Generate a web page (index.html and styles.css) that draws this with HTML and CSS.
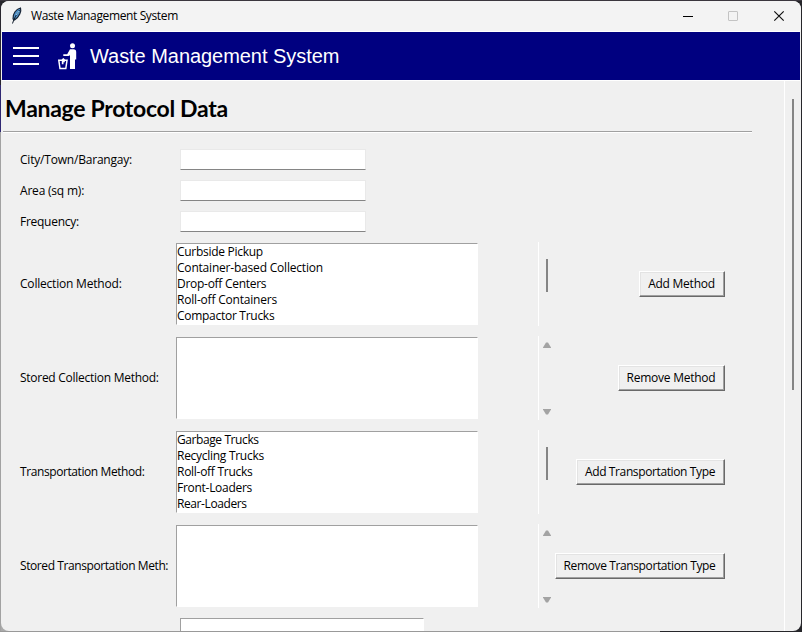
FILE: index.html
```
<!DOCTYPE html>
<html lang="en">
<head>
<meta charset="utf-8">
<title>Waste Management System</title>
<link rel="stylesheet" href="styles.css">
</head>
<body>
<div class="window">
  <header class="titlebar">
    <svg class="feather" width="12" height="18" viewBox="0 0 12 18"><path d="M2 12C1.500 7 5 2 9.500 1c1 3-1 9-6 12z" fill="#4d8fc8" stroke="#182536" stroke-width="1.200"/><path d="M8.500 3C6 7 3 11 1.500 16.500" fill="none" stroke="#111c2b" stroke-width="1"/><path d="M5 8l3-4" stroke="#9bd0f2" stroke-width="1"/></svg>
    <span class="caption">Waste Management System</span>
    <svg class="controls" width="104" height="12" viewBox="0 0 104 12"><path d="M0 6.500h10" stroke="#000"/><rect x="45.500" y="1.500" width="9" height="9" rx=".5" fill="none" stroke="#c3c3c3"/><path d="M91.300 1.300l9.400 9.400M100.700 1.300l-9.400 9.400" stroke="#111" stroke-width="1.200"/></svg>
  </header>
  <nav class="navbar">
    <div class="burger"><i></i><i></i><i></i></div>
    <svg class="logo" width="20" height="27" viewBox="0 0 20 27" fill="#fff"><circle cx="14.500" cy="2.800" r="2.500"/><path d="M12 6.300h3.500q2.700 0 2.700 2.700v7.500H17V26h-5V12.300L10.500 13H5.300v-1.800h3.900z"/><path d="M.8 17.300h8.200L7.800 25.500H2z" fill="none" stroke="#fff" stroke-width="1.500"/><path d="M3.800 16.200l1.500-1.200 1.500 1.200v3H5.500v2H3.800z"/></svg>
    <span class="brand">Waste Management System</span>
  </nav>
  <div class="body">
    <main class="page">
      <h1>Manage Protocol Data</h1>
      <hr>
      <div class="form">
        <div class="row"><label class="loose">City/Town/Barangay:</label><div class="entry"></div></div>
        <div class="row"><label class="loose">Area (sq m):</label><div class="entry"></div></div>
        <div class="row"><label>Frequency:</label><div class="entry"></div></div>
        <div class="row tall"><label class="loose">Collection Method:</label>
          <ul class="list"><li>Curbside Pickup</li><li class="loose">Container-based Collection</li><li>Drop-off Centers</li><li class="loose">Roll-off Containers</li><li>Compactor Trucks</li></ul>
          <div class="scroll"><b class="thumb"></b></div><button class="w-am">Add Method</button></div>
        <div class="row tall"><label>Stored Collection Method:</label>
          <ul class="list"></ul>
          <div class="scroll arrows"><svg width="8" height="6"><path d="M0 5.500L3 .5h2l3 5V6H0z"/></svg><svg width="8" height="6"><path d="M0 .5L3 5.500h2l3-5V0H0z"/></svg></div><button class="w-rm">Remove Method</button></div>
        <div class="row tall"><label class="tight">Transportation Method:</label>
          <ul class="list"><li class="tight">Garbage Trucks</li><li>Recycling Trucks</li><li>Roll-off Trucks</li><li>Front-Loaders</li><li class="tight">Rear-Loaders</li></ul>
          <div class="scroll"><b class="thumb"></b></div><button class="w-at">Add Transportation Type</button></div>
        <div class="row tall"><label class="tight">Stored Transportation Meth:</label>
          <ul class="list"></ul>
          <div class="scroll arrows"><svg width="8" height="6"><path d="M0 5.500L3 .5h2l3 5V6H0z"/></svg><svg width="8" height="6"><path d="M0 .5L3 5.500h2l3-5V0H0z"/></svg></div><button class="w-rt">Remove Transportation Type</button></div>
        <div class="note"></div>
      </div>
    </main>
    <aside class="mainscroll"><b></b></aside>
  </div>
</div>
</body>
</html>
```

FILE: styles.css
```
* { box-sizing: border-box; }
body {
  margin: 0; width: 802px; height: 632px; overflow: hidden; padding: 1px 1px 1px 1px;
  background:
    linear-gradient(#3a363d, #3a363d) 0 0 / 802px 1px no-repeat,
    linear-gradient(#999, #999) 0 631px / 660px 1px no-repeat,
    linear-gradient(#29262e 0 85px, #302873 85px 132px, #a2a2a2 132px) 0 0 / 1px 632px no-repeat,
    linear-gradient(#aaa, #aaa) 0 622px / 10px 10px no-repeat,
    #26262a;
  font: 12px/16px "Open Sans", "Noto Sans", sans-serif; color: #000;
}
.window { width: 800px; height: 630px; border-radius: 8px; overflow: hidden; background: #f0f0f0; display: flex; flex-direction: column; }
.titlebar { height: 30px; flex: none; background: #f3f3f3; display: flex; align-items: center; padding: 0 15px 0 10px; }
.feather { margin-right: 8px; }
.caption { letter-spacing: -.37px; }
.controls { margin-left: auto; }
.navbar { height: 50px; flex: none; margin-right: 1px; margin-left: 1px; background: #000080; border-top: 1px solid #fff; border-bottom: 1px solid #fff; display: flex; align-items: center; padding-left: 11px; }
.burger { display: flex; flex-direction: column; gap: 6px; width: 26px; padding-top: 1px; margin-bottom: 1px; }
.burger i { height: 2px; background: #fff; }
.logo { margin-left: 19px; }
.brand { margin-left: 12px; color: #fff; font: 20px/26px "Liberation Sans", sans-serif; letter-spacing: -.05px; white-space: nowrap; }
.titlebar .controls { margin-right: -1px; position: static; }
.body { flex: 1; min-height: 0; display: flex; }
.page { width: 783px; overflow: hidden; padding-left: 2px; }
h1 { margin: 0; height: 50px; padding: 12px 0 0 2px; font: bold 23px/30px Lato, sans-serif; letter-spacing: -.3px; white-space: nowrap; }
hr { margin: 0; width: 749px; height: 2px; border: 0; border-top: 1px solid #a0a0a0; background: #fff; }
.form { padding: 11px 0 0 17px; width: 722px; }
.row { height: 31px; display: flex; align-items: center; }
.row label { width: 160px; flex: none; white-space: nowrap; letter-spacing: -.27px; }
.row .loose { letter-spacing: -.2px; }
.row .tight { letter-spacing: -.41px; }
.entry { width: 186px; height: 21px; background: #fff; border: 1px solid #e9e9e9; border-bottom-color: #858585; }
.tall { height: 94px; }
.tall label { width: 156px; }
.list { margin: 0; padding: 0; list-style: none; width: 302px; height: 82px; flex: none; background: #fff; border: 1px solid #fff; border-top-color: #a0a0a0; border-left-color: #a0a0a0; white-space: nowrap; letter-spacing: -.28px; }
.scroll { width: 17px; height: 84px; margin-left: 60px; margin-right: -17px; flex: none; border-left: 1px solid #fff; padding: 17px 0 0 7px; }
.thumb { display: block; width: 2px; height: 33px; background: #858585; }
.arrows { display: flex; flex-direction: column; justify-content: space-between; padding: 6px 0 5px 4px; }
.arrows svg { fill: #a3a3a3; }
button { margin: 0 0 0 auto; padding: 0 1px 1px 0; height: 26px; font: inherit; letter-spacing: -.25px; white-space: nowrap; color: #000; background: #f0f0f0; border: 1px solid #fff; border-right-color: #696969; border-bottom-color: #696969; border-radius: 0; box-shadow: inset -1px -1px #a0a0a0, inset 1px 1px #e3e3e3; }
.w-am { width: 86px; } .w-rm { width: 107px; }
.w-at { width: 149px; letter-spacing: -.38px; } .w-rt { width: 170px; letter-spacing: -.38px; }
.note { width: 244px; height: 30px; margin: 5px 0 0 160px; background: #fff; border: 1px solid #a0a0a0; border-right-color: #fff; }
.mainscroll { width: 16px; flex: none; border-left: 1px solid #fff; padding: 18px 0 0 7px; }
.mainscroll b { display: block; width: 2px; height: 291px; background: #858585; }
```
